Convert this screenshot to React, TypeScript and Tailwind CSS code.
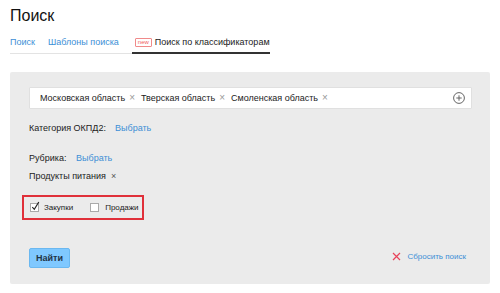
import React from "react";

const Tag = ({ label }: { label: string }) => (
  <span className="flex items-center mr-[6px]">
    <span>{label}</span>
    <span className="ml-[4px] text-[#999] text-[10px] leading-none">×</span>
  </span>
);

export default function App() {
  return (
    <div className="w-[500px] h-[293px] bg-white font-['Liberation_Sans',Arial,sans-serif] text-[#222] overflow-hidden">
      <div className="px-[10px] pt-[6px]">
        <h1 className="text-[16px] leading-[20px] text-[#111]">Поиск</h1>
        <div className="flex items-end mt-[10px] text-[9px] leading-[12px]">
          <div className="pr-[13px] pb-[5px] border-b border-[#e3e3e3] text-[#3d8fd6]">Поиск</div>
          <div className="pr-[13px] pb-[5px] border-b border-[#e3e3e3] text-[#3d8fd6]">Шаблоны поиска</div>
          <div className="flex items-center pl-[3px] pb-[4px] border-b-2 border-[#333] text-[#222]">
            <span className="border border-[#f08a8a] text-[#f06060] text-[6px] leading-[6px] px-[2px] py-[0.5px] rounded-[1px] mr-[3px]">new</span>
            <span>Поиск по классификаторам</span>
          </div>
        </div>
      </div>
      <div className="mx-[10px] mt-[18px] bg-[#ebebeb] rounded-[2px] pl-[19px] pr-[18px] pt-[15px] pb-[16px] text-[9px] leading-[12px]">
        <div className="h-[22px] bg-white border border-[#e0e0e0] rounded-[1px] flex items-center pl-[10px] pr-[6px]">
          <Tag label="Московская область" />
          <Tag label="Тверская область" />
          <Tag label="Смоленская область" />
          <div className="flex-1" />
          <svg width="12" height="12" viewBox="0 0 12 12">
            <circle cx="6" cy="6" r="5.4" fill="none" stroke="#555" strokeWidth="0.9" />
            <path d="M6 3.3V8.7M3.3 6H8.7" stroke="#555" strokeWidth="0.9" />
          </svg>
        </div>
        <div className="mt-[13px] flex">
          <span className="w-[86px]">Категория ОКПД2:</span>
          <span className="text-[#3d8fd6]">Выбрать</span>
        </div>
        <div className="mt-[18px] flex">
          <span className="w-[47px]">Рубрика:</span>
          <span className="text-[#3d8fd6]">Выбрать</span>
        </div>
        <div className="mt-[6px] flex items-center">
          <span>Продукты питания</span>
          <span className="ml-[5px] text-[#555] text-[9px] leading-none">×</span>
        </div>
        <div className="mt-[13px] w-[122px] h-[25px] ml-[-7px] border-2 border-[#e0303a] flex items-center pl-[6px] text-[8px]">
          <span className="relative w-[9px] h-[9px] border border-[#aaa] bg-white">
            <svg className="absolute left-[0px] top-[-3px]" width="9" height="10" viewBox="0 0 9 10">
              <path d="M1.3 6.2L3.3 8.3L7.8 1" fill="none" stroke="#222" strokeWidth="1.2" />
            </svg>
          </span>
          <span className="ml-[5px]">Закупки</span>
          <span className="ml-[17px] w-[9px] h-[9px] border border-[#aaa] bg-white" />
          <span className="ml-[6px]">Продажи</span>
        </div>
        <div className="mt-[28px] flex items-center justify-between pr-[6px]">
          <button className="w-[41px] h-[20px] bg-[#7fc8ff] border border-[#6bb8f0] rounded-[2px] text-[9px] font-bold text-[#1f3447]">Найти</button>
          <div className="flex items-center mb-[3px]">
            <svg width="9" height="9" viewBox="0 0 9 9">
              <path d="M1 1L8 8M8 1L1 8" stroke="#e8435a" strokeWidth="1.2" />
            </svg>
            <span className="ml-[6px] text-[8px] text-[#3d8fd6]">Сбросить поиск</span>
          </div>
        </div>
      </div>
    </div>
  );
}
